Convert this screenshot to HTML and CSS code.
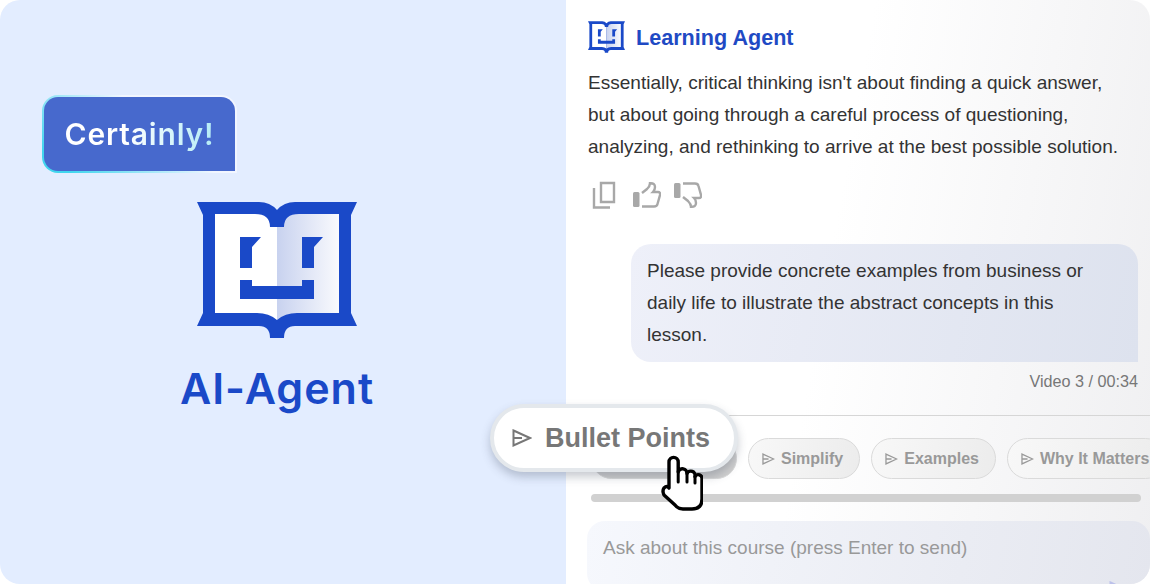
FILE: index.html
```html
<!DOCTYPE html>
<html lang="en">
<head>
    <meta charset="UTF-8">
    <title>Learning Agent</title>
    <link rel="stylesheet" href="styles.css">
</head>
<body>
    <svg class="defs" width="0" height="0">
        <defs>
            <linearGradient id="pageShade" x1="0" x2="1" y1="0" y2="0">
                <stop offset="0" stop-color="#c8d2ef"/>
                <stop offset="1" stop-color="#f9fafd"/>
            </linearGradient>
            <symbol id="bookLogo" viewBox="0 0 160 136">
                <path fill="#1a49c8" d="M0 0H62Q73 0 80 8Q87 0 98 0H160L154 13V111L160 124H98Q87 124 87 136H73Q73 124 62 124H0L6 111V13Z"/>
                <path fill="#fff" d="M18 12H58Q73 12 73 25H80V118Q72 111 60 111H18Z"/>
                <path fill="url(#pageShade)" d="M142 12H102Q87 12 87 25H80V118Q88 111 100 111H142Z"/>
                <path fill="#1a49c8" d="M43 35H64L55 45V66H43ZM105 35H126L117 45V66H105ZM43 78H55V84H105V78H117V97H43Z"/>
            </symbol>
            <symbol id="sendIcon" viewBox="0 0 20 18">
                <path fill="none" stroke="currentColor" stroke-width="2" d="M1.5 1.5L18 9L1.5 16.5ZM1.5 9H10"/>
            </symbol>
            <symbol id="thumbIcon" viewBox="0 0 28 26">
                <rect fill="#a8a8a8" x="0" y="10" width="6.5" height="15" rx="1.5"/>
                <path fill="none" stroke="#a8a8a8" stroke-width="2.4" d="M9 11L14 7Q17 4 17 1.2Q22 1 22 5Q22 8 20 10H25Q27.5 10 27 13L24.5 22Q24 24.5 21 24.5H9"/>
            </symbol>
        </defs>
    </svg>

    <div class="frame">
        <section class="intro">
            <div class="reply-bubble"><span class="reply-text">Certainly!</span></div>
            <svg class="intro-logo"><use href="#bookLogo"/></svg>
            <h1 class="intro-title">AI-Agent</h1>
        </section>

        <section class="chat">
            <div class="agent-head">
                <svg class="agent-logo"><use href="#bookLogo"/></svg>
                <span class="agent-name">Learning Agent</span>
            </div>
            <p class="agent-msg">Essentially, critical thinking isn't about finding a quick answer, but about going through a careful process of questioning, analyzing, and rethinking to arrive at the best possible solution.</p>
            <div class="msg-actions">
                <svg class="copy-icon" viewBox="0 0 25 28">
                    <path fill="none" stroke="#a8a8a8" stroke-width="2.4" d="M9 2H22V21H9Z"/>
                    <path fill="none" stroke="#a8a8a8" stroke-width="2.4" d="M2 7V26.5H18"/>
                </svg>
                <svg class="thumb-icon"><use href="#thumbIcon"/></svg>
                <svg class="thumb-icon thumb-down"><use href="#thumbIcon"/></svg>
            </div>
            <div class="user-msg">Please provide concrete examples from business or daily life to illustrate the abstract concepts in this lesson.</div>
            <div class="msg-source">Video 3 / 00:34</div>
            <hr class="divider">
            <div class="chips">
                <div class="chip chip-hidden"><svg class="chip-icon"><use href="#sendIcon"/></svg>Bullet Points</div>
                <div class="chip"><svg class="chip-icon"><use href="#sendIcon"/></svg>Simplify</div>
                <div class="chip"><svg class="chip-icon"><use href="#sendIcon"/></svg>Examples</div>
                <div class="chip"><svg class="chip-icon"><use href="#sendIcon"/></svg>Why It Matters</div>
            </div>
            <div class="scrollbar"></div>
            <div class="ask-box">
                <span class="ask-hint">Ask about this course (press Enter to send)</span>
                <svg class="ask-send"><use href="#sendIcon"/></svg>
            </div>
        </section>

        <div class="chip-big"><svg class="chip-big-icon"><use href="#sendIcon"/></svg>Bullet Points</div>
        <svg class="hand" viewBox="0 0 42 56">
            <path fill="#fff" stroke="#000" stroke-width="3.4" stroke-linejoin="round" stroke-linecap="round" d="M8 33V7A4.6 4.6 0 0 1 17.2 7V17A4.5 4.5 0 0 1 26 18.5A4.3 4.3 0 0 1 34 21.5A3.8 3.8 0 0 1 41 24V44Q41 54 31 54H22Q17 54 14 50L3 40Q1 36 3 33Q6 30 8 33Z"/>
            <path fill="none" stroke="#000" stroke-width="3" stroke-linecap="round" d="M17.2 16V27M26 18V27M34 21V28"/>
        </svg>
    </div>
</body>
</html>
```

FILE: styles.css
```css
html, body {
    margin: 0;
    background: #fff;
}
.defs {
    position: absolute;
}
.frame {
    position: relative;
    display: flex;
    width: 1150px;
    height: 584px;
    border-radius: 20px;
    overflow: hidden;
    font-family: "Liberation Sans", Arial, sans-serif;
}

/* left side */
.intro {
    display: flex;
    flex-direction: column;
    align-items: center;
    width: 566px;
    flex-shrink: 0;
    padding-top: 95px;
    box-sizing: border-box;
    background: #e3edff;
}
.reply-bubble {
    align-self: flex-start;
    box-sizing: border-box;
    width: 195px;
    height: 78px;
    margin-left: 42px;
    display: flex;
    align-items: center;
    justify-content: center;
    border: 2px solid transparent;
    border-radius: 16px 16px 0 16px;
    background: linear-gradient(#4769cd, #4769cd) padding-box,
        linear-gradient(40deg, #41d6ee 10%, #f2f6ff 60%) border-box;
}
.reply-text {
    font-family: Inter, sans-serif;
    font-size: 30px;
    font-weight: 600;
    letter-spacing: .8px;
    background: linear-gradient(90deg, #fff 40%, #b5ecf6 100%);
    -webkit-background-clip: text;
    background-clip: text;
    color: transparent;
}
.intro-logo {
    width: 160px;
    height: 136px;
    margin-top: 29px;
    margin-left: -12px;
}
.intro-title {
    margin: 22px 0 0 -12px;
    font-family: Inter, sans-serif;
    font-size: 43px;
    font-weight: 600;
    letter-spacing: 1px;
    line-height: 56px;
    color: #1a49c8;
}

/* right side */
.chat {
    flex: 1;
    min-width: 0;
    padding-top: 20px;
    padding-left: 22px;
    background: linear-gradient(100deg, #fff 45%, #efeff1 100%);
}
.agent-head {
    display: flex;
    align-items: center;
    gap: 11px;
    height: 33px;
}
.agent-logo {
    width: 37px;
    height: 32px;
}
.agent-name {
    position: relative;
    top: 1px;
    font-size: 21.6px;
    font-weight: 700;
    color: #1f4ac4;
}
.agent-msg {
    margin: 14px 0 0;
    width: 540px;
    font-size: 19.05px;
    line-height: 32px;
    color: #333;
}
.msg-actions {
    display: flex;
    align-items: center;
    gap: 16px;
    margin: 18px 0 0 4px;
    height: 28px;
}
.copy-icon {
    width: 25px;
    height: 28px;
}
.thumb-icon {
    width: 28px;
    height: 26px;
}
.thumb-down {
    transform: scaleY(-1);
    margin-left: -3px;
}
.user-msg {
    box-sizing: border-box;
    width: 507px;
    height: 118px;
    margin: 35px 0 0 43px;
    padding: 11px 40px 11px 16px;
    border-radius: 20px 20px 0 20px;
    background: linear-gradient(100deg, #eef0f9, #dde2ee);
    font-size: 19px;
    line-height: 32px;
    color: #333;
}
.msg-source {
    width: 550px;
    margin-top: 10px;
    text-align: right;
    font-size: 16.2px;
    line-height: 18px;
    color: #777;
}
.divider {
    height: 1px;
    margin: 25px 0 0 2px;
    border: 0;
    background: #d6d6d6;
}
.chips {
    display: flex;
    gap: 11px;
    margin: 22px 0 0 3px;
    overflow: hidden;
}
.chip {
    display: flex;
    align-items: center;
    flex-shrink: 0;
    box-sizing: border-box;
    height: 41px;
    padding: 0 16px 0 13px;
    border: 1.5px solid #dadada;
    border-radius: 21px;
    background: linear-gradient(100deg, #f8f8f8, #ececec);
    font-size: 16px;
    font-weight: 700;
    color: #999;
    white-space: nowrap;
}
.chip-hidden {
    width: 146px;
    background: #cfcfcf;
    color: #cfcfcf;
}
.chip-icon {
    width: 13px;
    height: 12px;
    margin-right: 6px;
}
.scrollbar {
    width: 550px;
    height: 8px;
    margin: 15px 0 0 3px;
    border-radius: 4px;
    background: #d1d1d1;
}
.ask-box {
    position: relative;
    height: 70px;
    margin: 19px 0 0 -1px;
    padding: 17px 16px 0;
    box-sizing: border-box;
    border-radius: 18px;
    background: linear-gradient(100deg, #f6f8fd, #e4e6ee);
    font-size: 19px;
    line-height: 20px;
    color: #999;
}
.ask-send {
    position: absolute;
    left: 522px;
    top: 60px;
    width: 20px;
    height: 18px;
    color: #bcc1ea;
}

/* hover state lying over both sides */
.chip-big {
    position: absolute;
    left: 490px;
    top: 404px;
    display: flex;
    align-items: center;
    box-sizing: border-box;
    width: 248px;
    height: 68px;
    padding-left: 18px;
    border: 4px solid #e4e8ec;
    border-radius: 34px;
    background: #fff;
    box-shadow: 0 5px 10px rgba(70, 80, 100, .3);
    font-size: 27px;
    font-weight: 700;
    color: #777;
}
.chip-big-icon {
    width: 20px;
    height: 18px;
    margin-right: 13px;
}
.hand {
    position: absolute;
    left: 661px;
    top: 455px;
    width: 42px;
    height: 56px;
}
```
